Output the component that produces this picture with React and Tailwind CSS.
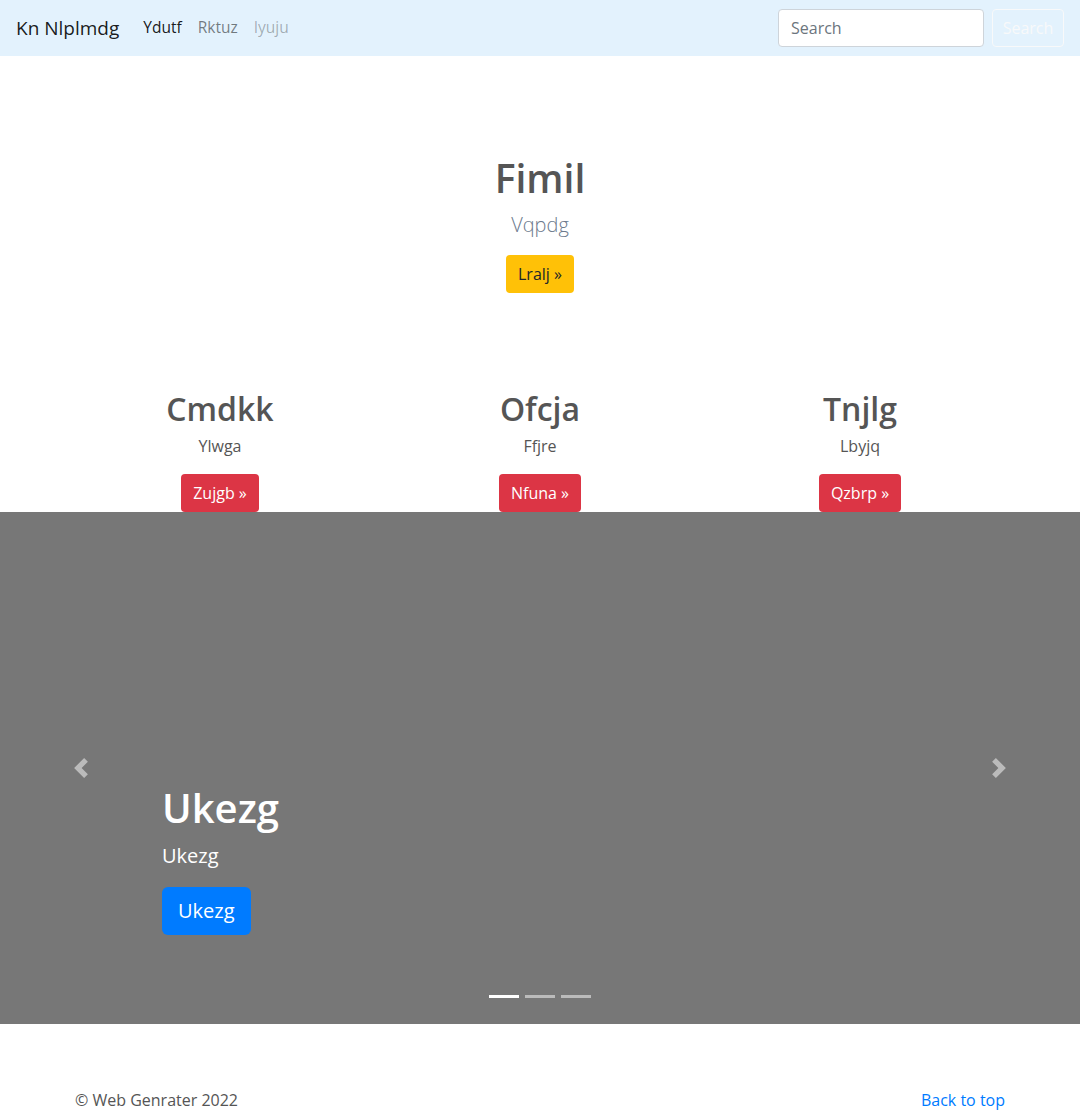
import { useState } from "react";

const font = { fontFamily: '"Open Sans", "Noto Sans", "Liberation Sans", sans-serif' };

function Navbar() {
  const [query, setQuery] = useState("");
  return (
    <nav className="h-14 bg-[#e3f2fd] flex items-center justify-between px-4">
      <div className="flex items-center">
        <a className="text-[19px] text-black/90 mr-4 leading-[30px]">Kn Nlplmdg</a>
        <ul className="flex items-center text-[15.5px]">
          <li className="px-2 text-black/90">Ydutf</li>
          <li className="px-2 text-black/50">Rktuz</li>
          <li className="px-2 text-black/30">Iyuju</li>
        </ul>
      </div>
      <form className="flex items-center" onSubmit={(e) => e.preventDefault()}>
        <input
          className="w-[206px] h-[38px] rounded border border-[#ced4da] bg-white px-3 text-[16px] text-[#495057] placeholder:text-[#6c757d] mr-2 outline-none"
          placeholder="Search"
          value={query}
          onChange={(e) => setQuery(e.target.value)}
        />
        <button className="h-[38px] w-[72px] rounded border border-[#f8f9fa] text-[#f8f9fa] text-[16px]">
          Search
        </button>
      </form>
    </nav>
  );
}

function Feature({ title, text, button }) {
  return (
    <div className="flex flex-col items-center">
      <h2 className="text-[32px] font-semibold leading-[38px] text-[#555]">{title}</h2>
      <p className="mt-[6px] text-[16px] leading-6 text-[#555]">{text}</p>
      <button className="mt-4 h-[38px] px-3 rounded bg-[#dc3545] text-white text-[16px]">{button} »</button>
    </div>
  );
}

function Carousel() {
  return (
    <div className="relative h-[512px] bg-[#777]">
      <div className="absolute left-[162px] top-[272px]">
        <h1 className="text-[40px] font-semibold leading-[48px] text-white">Ukezg</h1>
        <p className="mt-[9px] text-[20px] leading-[30px] text-white">Ukezg</p>
        <button className="mt-[16px] h-12 px-4 rounded-md bg-[#007bff] text-white text-[20px]">Ukezg</button>
      </div>
      <button className="absolute left-0 top-0 h-full w-[162px] flex items-center justify-center opacity-50">
        <svg width="20" height="20" viewBox="0 0 8 8" fill="#fff">
          <path d="M5.25 0l-4 4 4 4 1.5-1.5-2.5-2.5 2.5-2.5-1.5-1.5z" />
        </svg>
      </button>
      <button className="absolute right-0 top-0 h-full w-[162px] flex items-center justify-center opacity-50">
        <svg width="20" height="20" viewBox="0 0 8 8" fill="#fff">
          <path d="M2.75 0l-1.5 1.5 2.5 2.5-2.5 2.5 1.5 1.5 4-4-4-4z" />
        </svg>
      </button>
      <div className="absolute bottom-[26px] left-0 right-0 flex justify-center gap-[6px]">
        <span className="w-[30px] h-[3px] bg-white" />
        <span className="w-[30px] h-[3px] bg-white/50" />
        <span className="w-[30px] h-[3px] bg-white/50" />
      </div>
    </div>
  );
}

export default function App() {
  return (
    <div className="bg-white min-h-[1112px]" style={font}>
      <Navbar />
      <div className="flex flex-col items-center pt-[98px]">
        <h1 className="text-[39px] font-semibold leading-[48px] text-[#555]">Fimil</h1>
        <p className="mt-2 text-[20px] font-light leading-[30px] text-[#6c7a8d]">Vqpdg</p>
        <button className="mt-[15px] h-[38px] px-3 rounded bg-[#ffc107] text-[#212529] text-[16px]">Lralj »</button>
      </div>
      <div className="w-[960px] mx-auto grid grid-cols-3 mt-[97px]">
        <Feature title="Cmdkk" text="Ylwga" button="Zujgb" />
        <Feature title="Ofcja" text="Ffjre" button="Nfuna" />
        <Feature title="Tnjlg" text="Lbyjq" button="Qzbrp" />
      </div>
      <Carousel />
      <footer className="w-[960px] mx-auto px-[15px] pt-16 flex justify-between text-[16px] leading-6">
        <p className="text-[#555]">© Web Genrater 2022</p>
        <a className="text-[#007bff]">Back to top</a>
      </footer>
    </div>
  );
}
